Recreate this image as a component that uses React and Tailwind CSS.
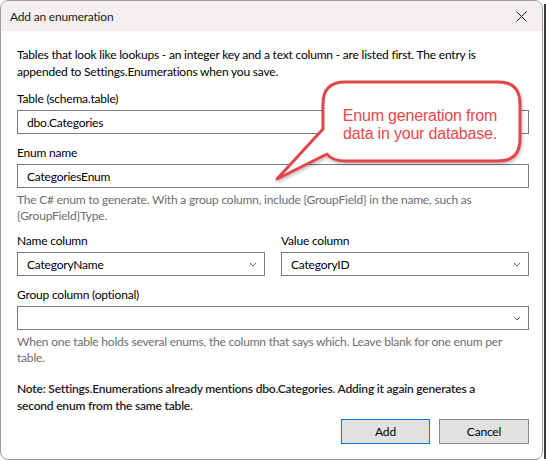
import React from 'react';

const Chevron = () => (
  <svg width="8" height="5" viewBox="0 0 8 5" className="shrink-0">
    <path d="M1 1 L4 4 L7 1" fill="none" stroke="#6a6a6a" strokeWidth="1" />
  </svg>
);

const Field = ({ value, select, className = '' }) => (
  <div className={`h-[24px] border border-[#7a7a7a] bg-white flex items-center pl-[9px] pr-[7px] ${className}`}>
    <span className="flex-1 text-[#000]">{value}</span>
    {select && <Chevron />}
  </div>
);

const Label = ({ children, className = '' }) => (
  <div className={`text-[#000] mb-[3px] ${className}`}>{children}</div>
);

const Callout = () => (
  <svg className="absolute left-0 top-0 pointer-events-none" width="546" height="461">
    <defs>
      <filter id="sh" x="-10%" y="-10%" width="120%" height="130%">
        <feDropShadow dx="1" dy="2" stdDeviation="1.5" floodColor="#000" floodOpacity="0.25" />
      </filter>
    </defs>
    <path
      d="M345 82 H498 Q520 82 520 104 V139 Q520 161 498 161 H346 Q332 161 327 154 L277 179 L323 129 V104 Q323 82 345 82 Z"
      fill="#fff" stroke="#e0474c" strokeWidth="3" strokeLinejoin="round" filter="url(#sh)"
    />
    <text x="420" y="121" textAnchor="middle" fill="#e8474c" fontFamily="'Liberation Sans', Arial, sans-serif" fontSize="16">Enum generation from</text>
    <text x="420" y="139" textAnchor="middle" fill="#e8474c" fontFamily="'Liberation Sans', Arial, sans-serif" fontSize="16">data in your database.</text>
  </svg>
);

export default function App() {
  return (
    <div className="w-[546px] h-[461px] bg-white flex relative text-[12px] leading-[17px] tracking-[-0.2px]" style={{ fontFamily: "Lato, 'Noto Sans', sans-serif" }}>
      <div className="w-[543px] h-[460px] border border-[#9c9c9c] rounded-[8px] overflow-hidden flex flex-col bg-white">
        <div className="h-[30px] shrink-0 bg-[#f4f0f1] flex items-center justify-between pl-[9px] pr-[15px]">
          <span className="text-[#1a1a1a]">Add an enumeration</span>
          <svg width="11" height="11" viewBox="0 0 11 11">
            <path d="M0.5 0.5 L10.5 10.5 M10.5 0.5 L0.5 10.5" stroke="#1a1a1a" strokeWidth="1" />
          </svg>
        </div>
        <div className="flex-1 pl-[16px] pr-[13px] pt-[15px] flex flex-col">
          <p className="text-[#000] whitespace-nowrap">
            Tables that look like lookups - an integer key and a text column - are listed first. The entry is<br />
            appended to Settings.Enumerations when you save.
          </p>

          <Label className="mt-[10px]">Table (schema.table)</Label>
          <Field value="dbo.Categories" select />

          <Label className="mt-[10px]">Enum name</Label>
          <Field value="CategoriesEnum" />
          <p className="text-[#6d6d6d] mt-[4px] leading-[16px] whitespace-nowrap">
            The C# enum to generate. With a group column, include {'{GroupField}'} in the name, such as<br />
            {'{GroupField}'}Type.
          </p>

          <div className="grid grid-cols-2 gap-x-[16px] mt-[8px]">
            <div>
              <Label>Name column</Label>
              <Field value="CategoryName" select />
            </div>
            <div>
              <Label>Value column</Label>
              <Field value="CategoryID" select />
            </div>
          </div>

          <Label className="mt-[10px]">Group column (optional)</Label>
          <Field value="" select />
          <p className="text-[#6d6d6d] mt-[4px] leading-[16px] whitespace-nowrap">
            When one table holds several enums, the column that says which. Leave blank for one enum per<br />
            table.
          </p>

          <p className="mt-[14px] font-semibold text-[#1a1a1a] whitespace-nowrap">
            Note: Settings.Enumerations already mentions dbo.Categories. Adding it again generates a<br />
            second enum from the same table.
          </p>

          <div className="flex justify-end gap-[9px] mt-[5px]">
            <button className="w-[89px] h-[25px] bg-[#e1e1e1] border border-[#0078d7] text-[#000]">Add</button>
            <button className="w-[90px] h-[25px] bg-[#e1e1e1] border border-[#8a8a8a] text-[#000]">Cancel</button>
          </div>
        </div>
      </div>
      <div className="w-[1px]" />
      <div className="w-[2px] mt-[4px] mb-[2px] bg-[#3c3c3c]" />
      <Callout />
    </div>
  );
}
